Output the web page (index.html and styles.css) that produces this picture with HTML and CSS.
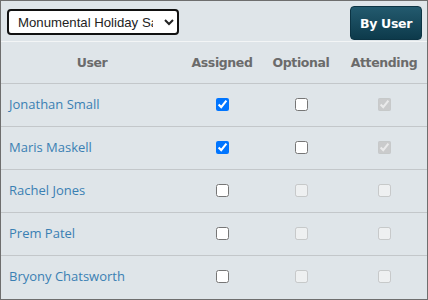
FILE: index.html
```html
<!DOCTYPE html>
<html lang="en">
<head>
  <meta charset="UTF-8">
  <title>Event Attendance</title>
  <link rel="stylesheet" href="styles.css">
</head>
<body>

<div class="panel">
  <div class="toolbar">
    <select class="event-select">
      <option>Monumental Holiday Sale</option>
    </select>
    <button type="button" class="btn-view">By User</button>
  </div>

  <table class="attendance">
    <thead>
      <tr>
        <th class="col-user">User</th>
        <th class="col-check">Assigned</th>
        <th class="col-check">Optional</th>
        <th class="col-check">Attending</th>
      </tr>
    </thead>
    <tbody>
      <tr>
        <td class="name"><a href="#">Jonathan Small</a></td>
        <td><input type="checkbox" checked></td>
        <td><input type="checkbox"></td>
        <td><input type="checkbox" checked disabled></td>
      </tr>
      <tr>
        <td class="name"><a href="#">Maris Maskell</a></td>
        <td><input type="checkbox" checked></td>
        <td><input type="checkbox"></td>
        <td><input type="checkbox" checked disabled></td>
      </tr>
      <tr>
        <td class="name"><a href="#">Rachel Jones</a></td>
        <td><input type="checkbox"></td>
        <td><input type="checkbox" disabled></td>
        <td><input type="checkbox" disabled></td>
      </tr>
      <tr>
        <td class="name"><a href="#">Prem Patel</a></td>
        <td><input type="checkbox"></td>
        <td><input type="checkbox" disabled></td>
        <td><input type="checkbox" disabled></td>
      </tr>
      <tr>
        <td class="name"><a href="#">Bryony Chatsworth</a></td>
        <td><input type="checkbox"></td>
        <td><input type="checkbox" disabled></td>
        <td><input type="checkbox" disabled></td>
      </tr>
    </tbody>
  </table>
</div>

</body>
</html>
```

FILE: styles.css
```css
* {
  box-sizing: border-box;
  margin: 0;
  padding: 0;
}

body {
  background-color: #fff;
  font-family: 'Open Sans', sans-serif;
}

.panel {
  width: 428px;
  height: 300px;
  border: 1px solid #6e6e6e;
  background-color: #dfe5e9;
}

.toolbar {
  display: flex;
  justify-content: space-between;
  align-items: center;
  height: 41px;
  padding: 0 5px 0 6px;
  border-bottom: 1px solid #f3f5f6;
}

.event-select {
  width: 172px;
  height: 26px;
  margin-top: 2px;
  padding: 0 8px 0 5px;
  border: 2px solid #111;
  border-radius: 4px;
  background-color: #fff;
  font-family: 'Liberation Sans', Arial, sans-serif;
  font-size: 13.2px;
  color: #222;
}

.btn-view {
  width: 72px;
  height: 34px;
  margin-top: 4px;
  border: 1px solid #0c3444;
  border-radius: 4px;
  background: linear-gradient(#235a6e, #0d3a4b);
  color: #fff;
  font-family: 'DejaVu Sans', sans-serif;
  font-weight: bold;
  font-size: 12.5px;
  letter-spacing: -0.3px;
  cursor: pointer;
}

.attendance {
  width: 100%;
  border-collapse: collapse;
  table-layout: fixed;
}

.attendance th {
  height: 41px;
  font-family: 'DejaVu Sans', sans-serif;
  font-size: 12.5px;
  font-weight: bold;
  letter-spacing: -0.4px;
  color: #6b6b6b;
  text-align: center;
  border-bottom: 1px solid #c3c7ca;
}

.col-user {
  width: 182px;
}

.attendance th:nth-child(2) {
  width: 78px;
}

.attendance th:nth-child(3) {
  width: 80px;
}

.attendance td {
  height: 43px;
  padding-bottom: 3px;
  text-align: center;
  border-top: 1px solid #fbfcfc;
  border-bottom: 1px solid #c3c7ca;
}

.attendance tbody tr:last-child td {
  border-bottom: none;
}

.attendance td.name {
  text-align: left;
  padding-left: 8px;
}

.name a {
  color: #3a80b3;
  text-decoration: none;
  font-size: 13px;
}

input[type="checkbox"] {
  width: 13px;
  height: 13px;
  vertical-align: middle;
}
```
